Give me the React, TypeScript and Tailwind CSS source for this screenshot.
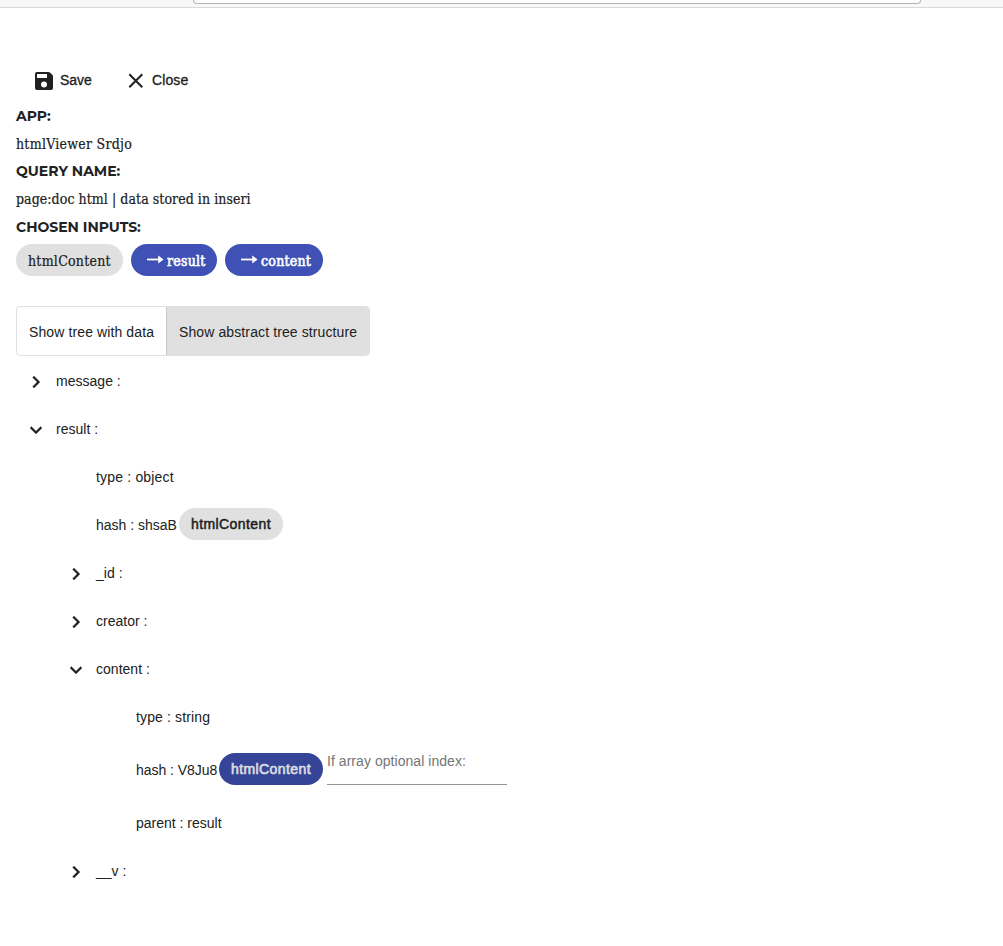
import type { ReactNode } from "react";

const SANS = "font-['Liberation_Sans',Arial,sans-serif]";
const SLAB =
  "font-['Roboto_Slab','DejaVu_Serif_Condensed','DejaVu_Serif',serif] [-webkit-text-stroke:0.2px_currentColor]";

function Chevron({ open }: { open: boolean }) {
  return (
    <svg viewBox="0 0 24 24" className="h-6 w-6 shrink-0 fill-current stroke-current stroke-[0.3]">
      <path
        d={
          open
            ? "M16.59 8.59 12 13.17 7.41 8.59 6 10l6 6 6-6z"
            : "M10 6 8.59 7.41 13.17 12l-4.58 4.59L10 18l6-6z"
        }
      />
    </svg>
  );
}

function Arrow() {
  return (
    <svg viewBox="0 0 17 10" className="-mt-px h-[10px] w-[17px] shrink-0">
      <path d="M0 4.5H13" stroke="currentColor" strokeWidth="1.8" />
      <path d="M11.2 .5 16.6 4.5 11.2 8.5z" fill="currentColor" />
    </svg>
  );
}

function InputChip({ label, width }: { label: string; width: string }) {
  return (
    <div className={`flex items-center gap-[3px] rounded-full bg-[#3f51b5] pt-px pl-4 text-white [-webkit-text-stroke:0.6px_currentColor] ${width}`}>
      <Arrow />
      <span className="pt-px">{label}</span>
    </div>
  );
}

function Branch({ label, open = false, nested = false }: { label: string; open?: boolean; nested?: boolean }) {
  return (
    <div className={`flex h-12 items-center ${nested ? "pl-12" : "pl-2"}`}>
      <div className="pt-px"><Chevron open={open} /></div>
      <span className="pl-2 tracking-[0.02px]">{label}</span>
    </div>
  );
}

function Leaf({ children, deep = false, tall = false }: { children: ReactNode; deep?: boolean; tall?: boolean }) {
  return (
    <div className={`flex items-center ${deep ? "pl-[120px]" : "pl-20"} ${tall ? "h-[58px]" : "h-12"}`}>
      {children}
    </div>
  );
}

function Heading({ children }: { children: ReactNode }) {
  return (
    <h2 className="h-7 font-['Montserrat',Inter,sans-serif] text-[14px] leading-7 font-bold">
      <span>{children}</span>
    </h2>
  );
}

export default function App() {
  return (
    <div className={`h-[946px] w-full overflow-hidden bg-white text-[14px] text-[#212121] ${SANS}`}>
      <div className="flex h-2 border-b border-[#dadada] bg-[#f8f8f8] pl-[193px]">
        <div className="h-1 w-[728px] rounded-b-[4px] border border-t-0 border-[#b3b3b3] bg-white" />
      </div>
      <main className="px-4 pt-[54px]">
        <div className="flex h-9 items-center pl-4 [-webkit-text-stroke:0.3px_currentColor]">
          <button className="flex w-[92px] items-center gap-1">
            <svg viewBox="0 0 24 24" className="mt-[2px] h-6 w-6 fill-current">
              <path fillRule="evenodd" d="M5 3h11.5q1 0 1.7.7l2.1 2.1q.7.7.7 1.7V19a2 2 0 0 1-2 2H5a2 2 0 0 1-2-2V5a2 2 0 0 1 2-2zm0 2v4h10V5zm7 7.6a3 3 0 1 0 0 6 3 3 0 0 0 0-6z" />
            </svg>
            Save
          </button>
          <button className="flex items-center gap-1 tracking-[0.1px]">
            <svg viewBox="0 0 24 24" className="mt-[2px] h-6 w-6 fill-none stroke-current stroke-2">
              <path d="m5.3 5.3 13 13m0-13-13 13" />
            </svg>
            Close
          </button>
        </div>
        <section className="pt-1">
          <Heading>APP:</Heading>
          <p className={`h-[27px] leading-7 tracking-[0.26px] ${SLAB}`}><span>htmlViewer Srdjo</span></p>
          <Heading>QUERY NAME:</Heading>
          <p className={`h-7 leading-7 tracking-[0.06px] ${SLAB}`}><span>page:doc html | data stored in inseri</span></p>
          <Heading>CHOSEN INPUTS:</Heading>
          <div className={`mt-[3px] flex h-8 gap-2 leading-[34px] tracking-[0.25px] ${SLAB}`}>
            <div className="w-[107px] rounded-full bg-[#e0e0e0] pl-3"><span>htmlContent</span></div>
            <InputChip label="result" width="w-[86px]" />
            <InputChip label="content" width="w-[98px]" />
          </div>
        </section>
        <div className="mt-[30px] flex h-[50px] w-[354px] overflow-hidden rounded-[4px] border border-[#e0e0e0] leading-[50px] tracking-[0.11px]">
          <button className="w-[150px] border-r border-[#c8c8c8] pl-3 text-left whitespace-nowrap"><span>Show tree with data</span></button>
          <button className="flex-1 bg-[#e0e0e0] pl-3 text-left whitespace-nowrap"><span>Show abstract tree structure</span></button>
        </div>
        <div className="pt-px">
          <Branch label="message :" />
          <Branch label="result :" open />
          <Leaf><span className="tracking-[0.18px]">type : object</span></Leaf>
          <Leaf>
            <span className="w-[83px]">hash : shsaB</span>
            <button className="-mt-0.5 h-8 w-[104px] rounded-full bg-[#e0e0e0] tracking-[0.4px] [-webkit-text-stroke:0.5px_currentColor]">htmlContent</button>
          </Leaf>
          <Branch label="_id :" nested />
          <Branch label="creator :" nested />
          <Branch label="content :" open nested />
          <Leaf deep><span className="tracking-[0.13px]">type : string</span></Leaf>
          <Leaf deep tall>
            <span className="w-[83px] tracking-[-0.05px]">hash : V8Ju8</span>
            <button className="-mt-0.5 h-8 w-[104px] rounded-full bg-[#354497] tracking-[0.4px] text-[#d9dae0] [-webkit-text-stroke:0.7px_currentColor]">htmlContent</button>
            <div className="-mt-0.5 ml-1 h-8 w-[180px] border-b border-[#949494] leading-4 tracking-[0.05px] text-[#757575]"><span>If array optional index:</span></div>
          </Leaf>
          <Leaf deep>parent : result</Leaf>
          <Branch label="__v :" nested />
        </div>
      </main>
    </div>
  );
}
